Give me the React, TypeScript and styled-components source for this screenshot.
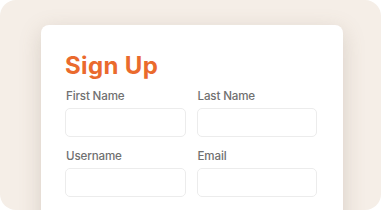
import React from "react";
import styled, { createGlobalStyle } from "styled-components";

const Global = createGlobalStyle`
  html, body { margin: 0; padding: 0; background: #ffffff; }
  * { box-sizing: border-box; }
`;

const Frame = styled.div`
  width: 381px;
  height: 210px;
  background: #f5eee7;
  border-radius: 16px;
  overflow: hidden;
  padding: 25px 38px 0 41px;
  font-family: Inter, "Noto Sans", sans-serif;
`;

const Card = styled.div`
  width: 302px;
  height: 220px;
  background: #ffffff;
  border-radius: 8px;
  box-shadow: 0 6px 22px rgba(120, 100, 80, 0.22);
  padding: 26px 26px 0 24px;
`;

const Title = styled.h1`
  margin: 0 0 8px 0;
  font-size: 24px;
  line-height: 29px;
  font-weight: 700;
  color: #ea6a2d;
  letter-spacing: 0.35px;
`;

const Grid = styled.div`
  display: grid;
  grid-template-columns: 1fr 1fr;
  column-gap: 11px;
  row-gap: 11px;
`;

const Field = styled.div`
  display: flex;
  flex-direction: column;
  gap: 4px;
`;

const Label = styled.label`
  font-size: 11.6px;
  line-height: 16px;
  color: #707070;
  font-weight: 500;
  letter-spacing: -0.15px;
  padding-left: 1px;
`;

const Input = styled.input`
  height: 29px;
  width: 100%;
  border: 1px solid #ececec;
  border-radius: 5px;
  background: #ffffff;
  outline: none;
  font-family: inherit;
`;

const fields = ["First Name", "Last Name", "Username", "Email"];

export default function App() {
  return (
    <>
      <Global />
      <Frame>
        <Card>
          <Title>Sign Up</Title>
          <Grid>
            {fields.map((f) => (
              <Field key={f}>
                <Label>{f}</Label>
                <Input type="text" />
              </Field>
            ))}
          </Grid>
        </Card>
      </Frame>
    </>
  );
}
